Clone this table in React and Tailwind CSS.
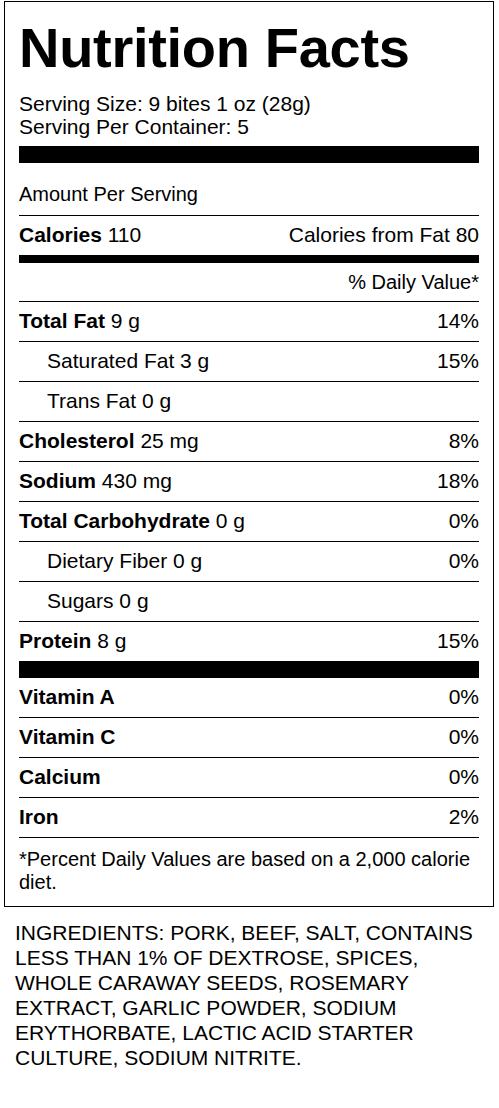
export default function App() {
  const font = { fontFamily: '"Liberation Sans", Arial, Helvetica, sans-serif' };
  const Row = ({ label, bold = true, value, dv, indent = false }) => (
    <div className="flex h-[40px] items-center justify-between border-t border-black pb-[2px]">
      <div className={indent ? "pl-[28px]" : ""}>
        {bold ? <span className="font-bold">{label}</span> : <span>{label}</span>}
        {value ? <span> {value}</span> : null}
      </div>
      <div>{dv}</div>
    </div>
  );
  return (
    <div className="min-h-[1108px] w-[499px] bg-white text-black" style={font}>
      <div className="ml-[4px] mt-[1px] w-[490px] border border-black px-[14px]">
        <div className="pt-[14px] text-[56px] font-bold leading-[64px] tracking-[-0.3px]">Nutrition Facts</div>
        <div className="mt-[12px] text-[21px] leading-[23px]">
          <div>Serving Size: 9 bites 1 oz (28g)</div>
          <div>Serving Per Container: 5</div>
        </div>
        <div className="mt-[8px] h-[17px] bg-black" />
        <div className="pb-[9px] pt-[20px] text-[20px] leading-[23px]">Amount Per Serving</div>
        <div className="text-[21px] leading-[23px]">
          <div className="flex h-[40px] items-center justify-between border-t border-black pb-[2px]">
            <div>
              <span className="font-bold">Calories</span> 110
            </div>
            <div>Calories from Fat 80</div>
          </div>
          <div className="h-[8px] bg-black" />
          <div className="flex h-[38px] items-center justify-end text-[20px]">% Daily Value*</div>
          <Row label="Total Fat" value="9 g" dv="14%" />
          <Row label="Saturated Fat 3 g" bold={false} indent dv="15%" />
          <Row label="Trans Fat 0 g" bold={false} indent dv="" />
          <Row label="Cholesterol" value="25 mg" dv="8%" />
          <Row label="Sodium" value="430 mg" dv="18%" />
          <Row label="Total Carbohydrate" value="0 g" dv="0%" />
          <Row label="Dietary Fiber 0 g" bold={false} indent dv="0%" />
          <Row label="Sugars 0 g" bold={false} indent dv="" />
          <Row label="Protein" value="8 g" dv="15%" />
          <div className="h-[17px] bg-black" />
          <div className="flex h-[39px] items-center justify-between pb-[2px]">
            <span className="font-bold">Vitamin A</span>
            <span>0%</span>
          </div>
          <Row label="Vitamin C" dv="0%" />
          <Row label="Calcium" dv="0%" />
          <Row label="Iron" dv="2%" />
          <div className="border-t border-black pb-[12px] pt-[10px] text-[20px]">
            *Percent Daily Values are based on a 2,000 calorie diet.
          </div>
        </div>
      </div>
      <div className="ml-[15px] mt-[13px] text-[21px] leading-[25px]">
        <div>INGREDIENTS: PORK, BEEF, SALT, CONTAINS</div>
        <div>LESS THAN 1% OF DEXTROSE, SPICES,</div>
        <div>WHOLE CARAWAY SEEDS, ROSEMARY</div>
        <div>EXTRACT, GARLIC POWDER, SODIUM</div>
        <div>ERYTHORBATE, LACTIC ACID STARTER</div>
        <div>CULTURE, SODIUM NITRITE.</div>
      </div>
    </div>
  );
}
